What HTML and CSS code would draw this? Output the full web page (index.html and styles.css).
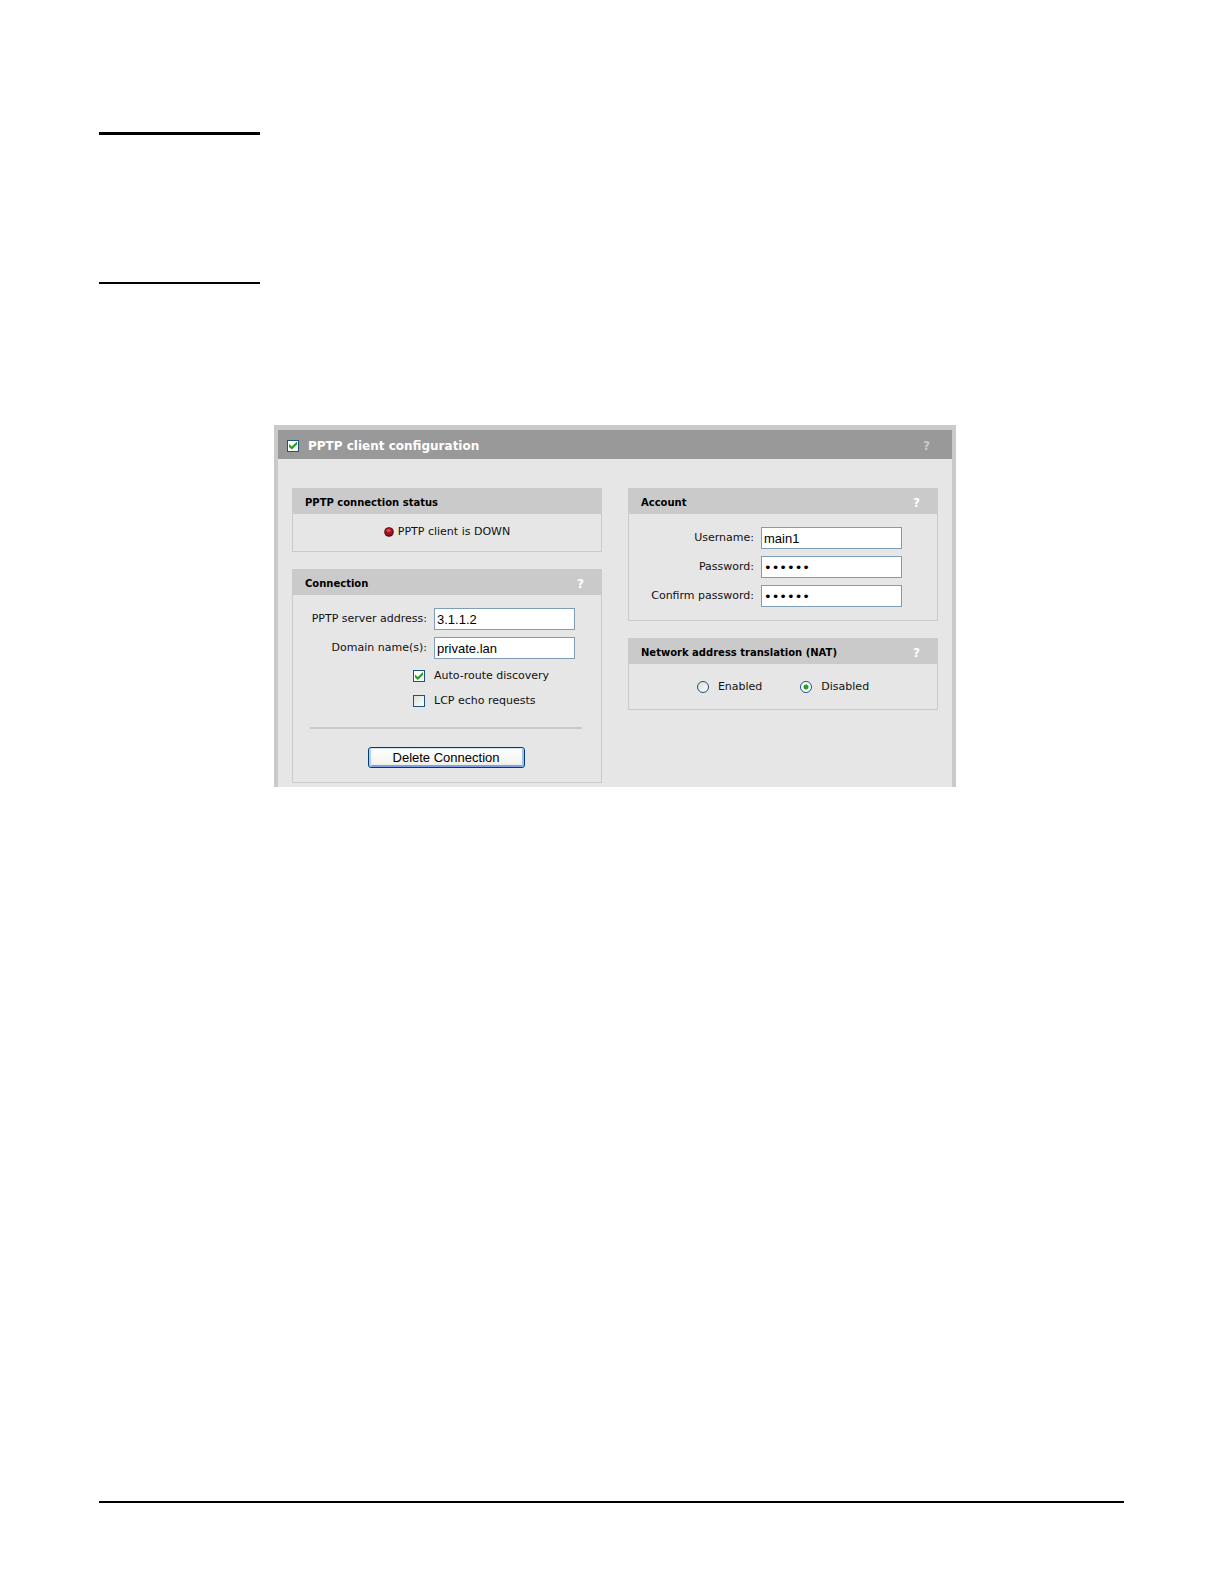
FILE: index.html
```html
<!DOCTYPE html>
<html lang="en">
<head>
    <meta charset="UTF-8">
    <meta name="viewport" content="width=device-width, initial-scale=1.0">
    <title>PPTP client configuration</title>

    <link rel="stylesheet" href="styles.css">
</head>
<body>

<main class="page">
  <hr class="rule rule--thick">
  <hr class="rule">

  <form class="panel">
    <header class="panel__header">
      <input class="check" type="checkbox" id="pptp-client" checked>
      <label class="panel__title" for="pptp-client">PPTP client configuration</label>
      <button class="help help--muted" type="button">?</button>
    </header>

    <div class="panel__body">
      <div class="column">

        <section class="box">
          <header class="box__header">
            <h2 class="box__title">PPTP connection status</h2>
          </header>
          <p class="status">
            <svg class="status__led" viewBox="0 0 10 10" width="10" height="10" aria-hidden="true">
              <circle cx="5" cy="5" r="4.8" fill="#4a0a10"/>
              <circle cx="4.8" cy="4.6" r="3.9" fill="#a5101c"/>
              <ellipse cx="4.6" cy="3.6" rx="2" ry="1.4" fill="#d05c68"/>
            </svg>
            PPTP client is DOWN
          </p>
        </section>

        <section class="box">
          <header class="box__header">
            <h2 class="box__title">Connection</h2>
            <button class="help" type="button">?</button>
          </header>
          <div class="fields">
            <label for="server">PPTP server address:</label>
            <input class="field" type="text" id="server" value="3.1.1.2">
            <label for="domain">Domain name(s):</label>
            <input class="field" type="text" id="domain" value="private.lan">
          </div>
          <div class="options">
            <input class="check" type="checkbox" id="auto-route" checked>
            <label for="auto-route">Auto-route discovery</label>
            <input class="check" type="checkbox" id="lcp-echo">
            <label for="lcp-echo">LCP echo requests</label>
          </div>
          <div class="actions">
            <button class="button" type="button">Delete Connection</button>
          </div>
        </section>

      </div>
      <div class="column">

        <section class="box">
          <header class="box__header">
            <h2 class="box__title">Account</h2>
            <button class="help" type="button">?</button>
          </header>
          <div class="fields fields--account">
            <label for="username">Username:</label>
            <input class="field" type="text" id="username" value="main1">
            <label for="password">Password:</label>
            <input class="field field--password" type="password" id="password" value="secret">
            <label for="confirm">Confirm password:</label>
            <input class="field field--password" type="password" id="confirm" value="secret">
          </div>
        </section>

        <section class="box">
          <header class="box__header">
            <h2 class="box__title">Network address translation (NAT)</h2>
            <button class="help" type="button">?</button>
          </header>
          <div class="choices">
            <label class="choice"><input class="radio" type="radio" name="nat"> Enabled</label>
            <label class="choice"><input class="radio" type="radio" name="nat" checked> Disabled</label>
          </div>
        </section>

      </div>
    </div>
  </form>

  <hr class="rule rule--footer">
</main>

</body>
</html>
```
FILE: styles.css
```css
*,
*::before,
*::after {
  box-sizing: border-box;
}

:root {
  --line: #cacaca;
  --panel: #e6e6e6;
  --control-border: #7f9db9;
  --check-border: #1c5180;
  --tick: #21a121;
}

body {
  margin: 0;
  font-family: "DejaVu Sans", Verdana, sans-serif;
  font-size: 11px;
  line-height: 14px;
  color: #111;
  background: #fff;
}

.page {
  display: flex;
  flex-direction: column;
  min-height: 100vh;
  padding: 132px 100px 81px 99px;
}

.rule {
  width: 161px;
  height: 2px;
  margin: 0 0 141px;
  border: 0;
  background: #000;
}

.rule--thick {
  height: 3px;
  margin-bottom: 147px;
}

.rule--footer {
  width: 100%;
  margin: auto 0 0;
}

/* panel */

.panel {
  margin: 0 168px 0 175px;
  border: 4px solid var(--line);
  border-top-width: 5px;
  border-bottom: 0;
  background: var(--panel);
}

.panel__header {
  display: flex;
  align-items: center;
  height: 29px;
  padding: 2px 22px 0 9px;
  background: #999;
}

.panel__title {
  flex: 1;
  margin-left: 9px;
  font-size: 12px;
  font-weight: bold;
  color: #fff;
}

.panel__body {
  display: grid;
  grid-template-columns: 1fr 1fr;
  gap: 26px;
  padding: 29px 14px 4px;
}

.column {
  display: flex;
  flex-direction: column;
  gap: 17px;
}

.help {
  padding: 0;
  border: 0;
  background: none;
  font: bold 12px/14px "DejaVu Sans", Verdana, sans-serif;
  color: #fff;
  cursor: pointer;
}

.help--muted {
  color: #ccc;
}

/* boxes */

.box {
  border: 1px solid var(--line);
}

.box__header {
  display: flex;
  align-items: center;
  justify-content: space-between;
  height: 25px;
  padding: 3px 17px 0 12px;
  background: var(--line);
}

.box__title {
  margin: 0;
  font-size: 10px;
  font-weight: bold;
  color: #000;
}

.status {
  display: flex;
  align-items: center;
  justify-content: center;
  gap: 4px;
  margin: 0;
  padding: 11px 0 12px;
}

.fields {
  display: grid;
  grid-template-columns: 1fr 141px;
  align-items: center;
  gap: 7px;
  padding: 13px 26px 0 11px;
  text-align: right;
}

.fields--account {
  padding: 13px 35px 13px 11px;
}

.field {
  width: 100%;
  height: 22px;
  padding: 0 2px;
  border: 1px solid var(--control-border);
  background: #fff;
  font: 13px "Liberation Sans", Arial, sans-serif;
  color: #000;
}

.field--password {
  font-family: "DejaVu Sans", Verdana, sans-serif;
}

.options {
  display: grid;
  grid-template-columns: 1fr 141px;
  align-items: center;
  gap: 11px 9px;
  padding: 10px 26px 0 11px;
}

.options .check {
  justify-self: end;
}

.actions {
  margin: 19px 19px 0 17px;
  padding: 18px 0 14px;
  border-top: 2px solid var(--line);
  text-align: center;
}

.button {
  display: block;
  width: 157px;
  height: 21px;
  margin: 0 auto;
  padding: 0;
  border: 1px solid #003c74;
  border-radius: 3px;
  background: linear-gradient(#fff, #f3f3ee 80%, #e4e2da);
  box-shadow: inset 0 1px #cee7ff, inset 2px 0 #b0cdf5, inset -2px 0 #a0c0f0, inset 0 -2px #7f9fe6;
  font: 13px "Liberation Sans", Arial, sans-serif;
  color: #000;
}

/* check boxes and radios */

.check,
.radio {
  appearance: none;
  flex: none;
  width: 12px;
  height: 12px;
  margin: 0;
  border: 1px solid var(--check-border);
  background: linear-gradient(135deg, #dcdcd7, #fff);
}

.check {
  display: grid;
  place-items: center;
}

.check:checked {
  background: #fff;
}

.check:checked::before {
  content: "";
  width: 8px;
  height: 8px;
  background: var(--tick);
  clip-path: polygon(0 30%, 35% 62%, 100% 0, 100% 38%, 35% 100%, 0 68%);
}

.radio {
  border-radius: 50%;
}

.radio:checked {
  background: radial-gradient(circle, var(--tick) 2px, #fff 3px);
}

.choices {
  display: flex;
  justify-content: center;
  gap: 38px;
  padding: 16px 0 15px;
}

.choice {
  display: flex;
  align-items: center;
  gap: 9px;
}
```
